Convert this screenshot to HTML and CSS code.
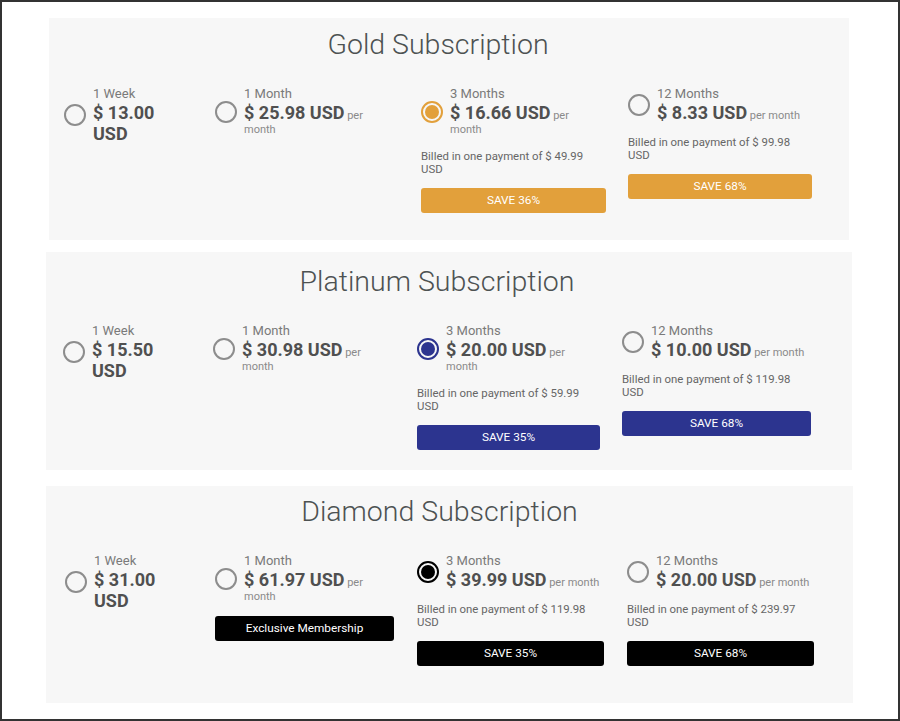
FILE: index.html
```html
<!DOCTYPE html>
<html lang="en">
<head>
<meta charset="utf-8">
<title>Subscriptions</title>
<link rel="stylesheet" href="styles.css">
</head>
<body>
<div class="frame">
  <section class="plan plan--gold">
    <h2 class="plan-title">Gold Subscription</h2>
    <div class="options">
      <div class="option">
        <div class="option-head">
          <span class="radio"></span>
          <div class="option-text">
            <div class="period">1 Week</div>
            <div class="price"><span class="amount">$ 13.00<br>USD</span></div>
          </div>
        </div>
      </div>
      <div class="option">
        <div class="option-head">
          <span class="radio"></span>
          <div class="option-text">
            <div class="period">1 Month</div>
            <div class="price"><span class="amount">$ 25.98 USD</span> per<br>month</div>
          </div>
        </div>
      </div>
      <div class="option">
        <div class="option-head">
          <span class="radio radio--checked"></span>
          <div class="option-text">
            <div class="period">3 Months</div>
            <div class="price"><span class="amount">$ 16.66 USD</span> per<br>month</div>
          </div>
        </div>
        <p class="billed">Billed in one payment of $ 49.99<br>USD</p>
        <div class="tag">SAVE 36%</div>
      </div>
      <div class="option">
        <div class="option-head">
          <span class="radio"></span>
          <div class="option-text">
            <div class="period">12 Months</div>
            <div class="price price--inline"><span class="amount">$ 8.33 USD</span> per month</div>
          </div>
        </div>
        <p class="billed">Billed in one payment of $ 99.98<br>USD</p>
        <div class="tag">SAVE 68%</div>
      </div>
    </div>
  </section>

  <section class="plan plan--platinum">
    <h2 class="plan-title">Platinum Subscription</h2>
    <div class="options">
      <div class="option">
        <div class="option-head">
          <span class="radio"></span>
          <div class="option-text">
            <div class="period">1 Week</div>
            <div class="price"><span class="amount">$ 15.50<br>USD</span></div>
          </div>
        </div>
      </div>
      <div class="option">
        <div class="option-head">
          <span class="radio"></span>
          <div class="option-text">
            <div class="period">1 Month</div>
            <div class="price"><span class="amount">$ 30.98 USD</span> per<br>month</div>
          </div>
        </div>
      </div>
      <div class="option">
        <div class="option-head">
          <span class="radio radio--checked"></span>
          <div class="option-text">
            <div class="period">3 Months</div>
            <div class="price"><span class="amount">$ 20.00 USD</span> per<br>month</div>
          </div>
        </div>
        <p class="billed">Billed in one payment of $ 59.99<br>USD</p>
        <div class="tag">SAVE 35%</div>
      </div>
      <div class="option">
        <div class="option-head">
          <span class="radio"></span>
          <div class="option-text">
            <div class="period">12 Months</div>
            <div class="price price--inline"><span class="amount">$ 10.00 USD</span> per month</div>
          </div>
        </div>
        <p class="billed">Billed in one payment of $ 119.98<br>USD</p>
        <div class="tag">SAVE 68%</div>
      </div>
    </div>
  </section>

  <section class="plan plan--diamond">
    <h2 class="plan-title">Diamond Subscription</h2>
    <div class="options">
      <div class="option">
        <div class="option-head">
          <span class="radio"></span>
          <div class="option-text">
            <div class="period">1 Week</div>
            <div class="price"><span class="amount">$ 31.00<br>USD</span></div>
          </div>
        </div>
      </div>
      <div class="option">
        <div class="option-head">
          <span class="radio"></span>
          <div class="option-text">
            <div class="period">1 Month</div>
            <div class="price"><span class="amount">$ 61.97 USD</span> per<br>month</div>
          </div>
        </div>
        <div class="tag">Exclusive Membership</div>
      </div>
      <div class="option">
        <div class="option-head">
          <span class="radio radio--checked"></span>
          <div class="option-text">
            <div class="period">3 Months</div>
            <div class="price price--inline"><span class="amount">$ 39.99 USD</span> per month</div>
          </div>
        </div>
        <p class="billed">Billed in one payment of $ 119.98<br>USD</p>
        <div class="tag">SAVE 35%</div>
      </div>
      <div class="option">
        <div class="option-head">
          <span class="radio"></span>
          <div class="option-text">
            <div class="period">12 Months</div>
            <div class="price price--inline"><span class="amount">$ 20.00 USD</span> per month</div>
          </div>
        </div>
        <p class="billed">Billed in one payment of $ 239.97<br>USD</p>
        <div class="tag">SAVE 68%</div>
      </div>
    </div>
  </section>
</div>
</body>
</html>
```

FILE: styles.css
```css
html, body {
  margin: 0;
  padding: 0;
  background: #ffffff;
}

body {
  font-family: Roboto, "Liberation Sans", Arial, sans-serif;
  color: #555555;
}

.frame {
  box-sizing: border-box;
  width: 900px;
  height: 721px;
  border: 2px solid #333333;
  display: flex;
  flex-direction: column;
  align-items: flex-start;
}

.plan {
  box-sizing: border-box;
  background: #f7f7f7;
}

.plan--gold {
  --accent: #e2a03b;
  margin: 16px 0 0 47px;
  width: 800px;
  height: 222px;
  padding: 10px 37px 0 15px;
}

.plan--platinum {
  --accent: #2c348f;
  margin: 12px 0 0 44px;
  width: 806px;
  height: 218px;
  padding: 13px 41px 0 17px;
}

.plan--diamond {
  --accent: #000000;
  margin: 16px 0 0 44px;
  width: 807px;
  height: 217px;
  padding: 9px 39px 0 19px;
}

.plan-title {
  margin: 0 0 24px;
  font-size: 28.5px;
  line-height: 34px;
  font-weight: 300;
  color: #4d5252;
  text-align: center;
}

.options {
  display: grid;
  align-items: start;
}

.plan--gold .options {
  grid-template-columns: 129px 184px 185px 184px;
  column-gap: 22px;
}

.plan--platinum .options {
  grid-template-columns: 128px 182px 183px 189px;
  column-gap: 22px;
}

.plan--diamond .options {
  grid-template-columns: 127px 179px 187px 187px;
  column-gap: 23px;
}

.option-head {
  display: flex;
  align-items: center;
  gap: 7px;
}

.radio {
  flex: none;
  box-sizing: border-box;
  width: 22px;
  height: 22px;
  border-radius: 50%;
  border: 2px solid #8d8d8d;
}

.radio--checked {
  border-color: var(--accent);
  padding: 2px;
  background: var(--accent);
  background-clip: content-box;
}

.period {
  font-size: 13px;
  line-height: 16px;
  color: #7a7a7a;
}

.price {
  font-size: 11px;
  line-height: 14px;
  color: #8a8a8a;
}

.price--inline {
  white-space: nowrap;
}

.amount {
  font-size: 18px;
  line-height: 21px;
  font-weight: 700;
  color: #505050;
}

.billed {
  margin: 13px 0 0;
  font-size: 11.4px;
  line-height: 13px;
  color: #666666;
}

.tag {
  margin-top: 12px;
  height: 25px;
  line-height: 25px;
  border-radius: 3px;
  background: var(--accent);
  color: #ffffff;
  font-size: 11.8px;
  font-weight: 400;
  text-align: center;
}
```
